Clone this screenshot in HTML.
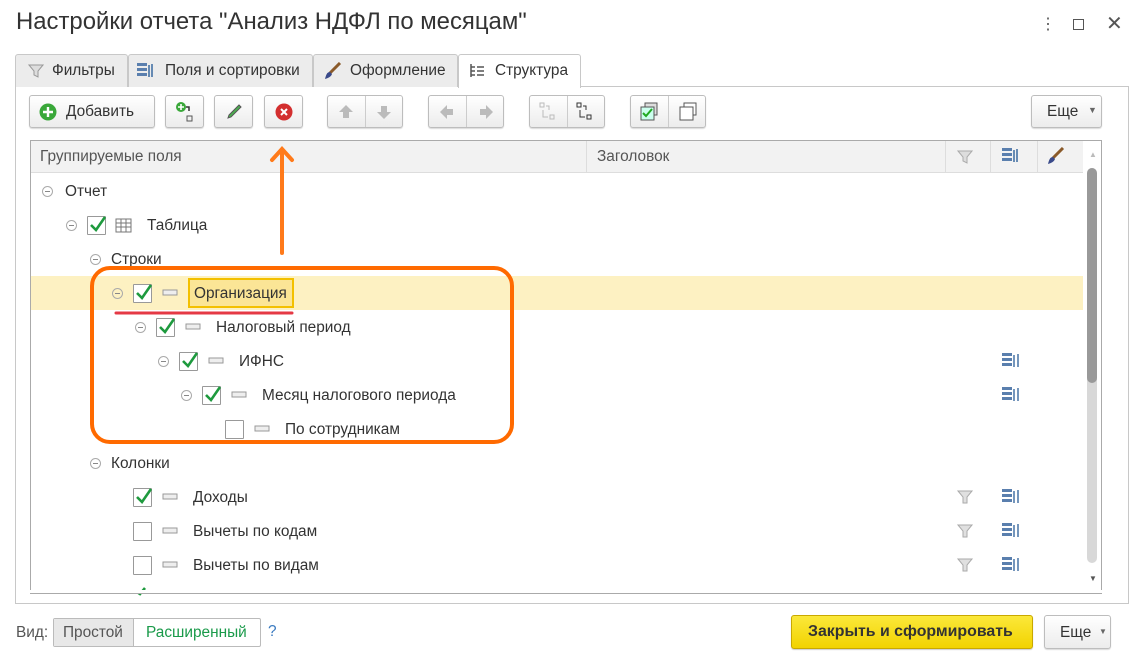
<!DOCTYPE html>
<html><head><meta charset="utf-8"><style>
*{box-sizing:border-box;margin:0;padding:0}
body{width:1143px;height:664px;background:#fff;font-family:"Liberation Sans","Noto Sans CJK SC",sans-serif;color:#333;position:relative;overflow:hidden;font-size:15.4px}
.a{position:absolute}
.tab{position:absolute;top:54px;height:33px;border:1px solid #c8c8c8;border-bottom:none;background:#ececec;border-radius:3px 3px 0 0;font-size:15.4px;line-height:32px;padding-left:36px;color:#333}
.btn{position:absolute;top:95px;height:33px;border:1px solid #bdbdbd;border-radius:3px;background:linear-gradient(#fff,#ececec);box-shadow:0 1px 1px rgba(0,0,0,.15)}
.t{position:absolute;font-size:15.4px;color:#333;white-space:nowrap}
.cb{position:absolute;width:19px;height:19px;border:1px solid #999;background:#fff;border-radius:1px}
.col{position:absolute;width:11px;height:11px;border:1px solid #aaa;border-radius:50%}
.col:after{content:"";position:absolute;left:2px;top:4px;width:5px;height:1px;background:#888}
</style></head><body>
<div class="a" style="left:16px;top:8px;font-size:23.9px;color:#333">Настройки отчета "Анализ НДФЛ по месяцам"</div>
<div class="a" style="left:1040px;top:14px;font-size:16px;color:#555">⋮</div>
<div class="a" style="left:1073px;top:19px;width:11px;height:11px;border:1px solid #555"></div>
<div class="a" style="left:1106px;top:11px;font-size:20px;color:#555">✕</div>

<div class="a" style="left:15px;top:86px;width:1114px;height:518px;border:1px solid #c8c8c8"></div>
<div class="tab" style="left:15px;width:113px">Фильтры<svg class="a" style="left:12px;top:8px" width="16" height="16"><path d="M1 2h14l-5 6v6l-4-2v-4z" fill="#ddd" stroke="#999"/></svg></div>
<div class="tab" style="left:128px;width:185px">Поля и сортировки<svg class="a" style="left:8px;top:7px" width="20" height="18"><g fill="#5a7fae"><rect x="0" y="1" width="10" height="3"/><rect x="0" y="6" width="10" height="3"/><rect x="0" y="11" width="10" height="3"/></g><path d="M12 3v12M15 2v13" stroke="#3a6aa0" stroke-width="1.5"/></svg></div>
<div class="tab" style="left:313px;width:145px">Оформление<svg class="a" style="left:10px;top:7px" width="18" height="18"><path d="M16 1L6 11" stroke="#8a5a2a" stroke-width="3"/><path d="M6 10c-3 0-4 3-5 7 3-1 6-2 7-5z" fill="#3a4a8a"/></svg></div>
<div class="tab" style="left:458px;width:123px;background:#fff;height:34px">Структура<svg class="a" style="left:10px;top:8px" width="16" height="16"><path d="M2 1v13M2 4h4M2 8h4M2 12h4M8 4h7M8 8h7M8 12h7" stroke="#555" stroke-width="1.5"/></svg></div>

<div class="btn" style="left:29px;width:126px"><svg class="a" style="left:9px;top:7px" width="18" height="18"><circle cx="9" cy="9" r="8.5" fill="#3aa83a"/><path d="M9 4v10M4 9h10" stroke="#fff" stroke-width="2.4"/></svg><span class="t" style="left:36px;top:7px">Добавить</span></div>
<div class="btn" style="left:165px;width:39px"><svg class="a" style="left:9px;top:5px" width="22" height="22"><circle cx="6" cy="6" r="5" fill="#3aa83a"/><path d="M6 3v6M3 6h6" stroke="#fff" stroke-width="1.6"/><path d="M14 10V6h-3" stroke="#333" stroke-width="1.5" fill="none"/><rect x="12" y="15" width="5" height="5" fill="none" stroke="#555"/></svg></div>
<div class="btn" style="left:214px;width:39px"><svg class="a" style="left:10px;top:7px" width="18" height="18"><path d="M14 2l2 2-10 10-3 1 1-3z" fill="#4caf50" stroke="#555"/></svg></div>
<div class="btn" style="left:264px;width:39px"><svg class="a" style="left:10px;top:7px" width="18" height="18"><circle cx="9" cy="9" r="8.5" fill="#d32f2f"/><path d="M6 6l6 6M12 6l-6 6" stroke="#fff" stroke-width="2"/></svg></div>
<div class="btn" style="left:327px;width:76px"><div class="a" style="left:37px;top:0;width:1px;height:31px;background:#ccc"></div><svg class="a" style="left:10px;top:8px" width="56" height="16" fill="#bbb"><path d="M8 1l7 7h-4v6H5V8H1z"/><path d="M46 15l7-7h-4V2h-6v6h-4z"/></svg></div>
<div class="btn" style="left:428px;width:76px"><div class="a" style="left:37px;top:0;width:1px;height:31px;background:#ccc"></div><svg class="a" style="left:10px;top:8px" width="56" height="16" fill="#bbb"><path d="M1 8l7-7v4h6v6H8v4z"/><path d="M54 8l-7-7v4h-6v6h6v4z"/></svg></div>
<div class="btn" style="left:529px;width:76px"><div class="a" style="left:37px;top:0;width:1px;height:31px;background:#ccc"></div><svg class="a" style="left:9px;top:6px" width="60" height="20" fill="none" stroke="#bbb"><rect x="1" y="1" width="4" height="4"/><path d="M10 8V4H7M4 8v7h5"/><rect x="11" y="13" width="4" height="4"/><g stroke="#333"><rect x="38" y="1" width="4" height="4"/><path d="M47 8V4h-3M41 8v7h5"/><rect x="48" y="13" width="4" height="4"/></g></svg></div>
<div class="btn" style="left:630px;width:76px"><div class="a" style="left:37px;top:0;width:1px;height:31px;background:#ccc"></div><svg class="a" style="left:9px;top:6px" width="60" height="20"><rect x="5" y="1" width="12" height="12" fill="#ddd" stroke="#555"/><rect x="1" y="5" width="13" height="13" fill="#cfe" stroke="#555"/><path d="M3 11l3 3 6-7" stroke="#2a2" stroke-width="2" fill="none"/><rect x="44" y="1" width="12" height="12" fill="#fff" stroke="#555"/><rect x="40" y="5" width="13" height="13" fill="#fff" stroke="#555"/></svg></div>
<div class="btn" style="left:1031px;width:71px"><span class="t" style="left:15px;top:7px">Еще</span><span class="a" style="left:56px;top:9px;font-size:9px;color:#666">▼</span></div>

<div class="a" style="left:30px;top:140px;width:1072px;height:454px;border:1px solid #aaa"></div>
<div class="a" style="left:31px;top:141px;width:1052px;height:32px;background:#f2f2f2;border-bottom:1px solid #ddd"></div>
<div class="a" style="left:586px;top:141px;width:1px;height:32px;background:#ddd"></div>
<div class="a" style="left:945px;top:141px;width:1px;height:32px;background:#ddd"></div>
<div class="a" style="left:990px;top:141px;width:1px;height:32px;background:#ddd"></div>
<div class="a" style="left:1037px;top:141px;width:1px;height:32px;background:#ddd"></div>
<span class="t" style="left:40px;top:148px;color:#555">Группируемые поля</span>
<span class="t" style="left:597px;top:148px;color:#555">Заголовок</span>
<svg class="a" style="left:957px;top:149px" width="16" height="16"><path d="M1 2h14l-5 6v6l-4-2v-4z" fill="#ddd" stroke="#aaa"/></svg>
<svg class="a" style="left:1002px;top:147px" width="20" height="18"><g fill="#5a7fae"><rect x="0" y="1" width="10" height="3"/><rect x="0" y="6" width="10" height="3"/><rect x="0" y="11" width="10" height="3"/></g><path d="M12 3v12M15 2v13" stroke="#3a6aa0" stroke-width="1.5"/></svg>
<svg class="a" style="left:1047px;top:147px" width="18" height="18"><path d="M16 1L6 11" stroke="#8a5a2a" stroke-width="3"/><path d="M6 10c-3 0-4 3-5 7 3-1 6-2 7-5z" fill="#3a4a8a"/></svg>
<span class="a" style="left:1089px;top:150px;font-size:8px;color:#bbb">▲</span>
<span class="a" style="left:1089px;top:574px;font-size:8px;color:#555">▼</span>
<div class="a" style="left:1087px;top:168px;width:10px;height:395px;background:#d8d8d8;border-radius:5px"></div>
<div class="a" style="left:1087px;top:168px;width:10px;height:215px;background:#999;border-radius:5px"></div>

<div class="a" style="left:31px;top:276px;width:1052px;height:34px;background:#fdf1c2"></div>

<div class="col" style="left:42px;top:186px"></div><span class="t" style="left:65px;top:183px">Отчет</span>
<div class="col" style="left:66px;top:220px"></div><div class="cb" style="left:87px;top:216px"></div>
<svg class="a" style="left:115px;top:218px" width="18" height="16" fill="none" stroke="#777"><rect x="1" y="1" width="15" height="13"/><path d="M1 5h15M1 9h15M6 1v13M11 1v13"/></svg>
<span class="t" style="left:147px;top:217px">Таблица</span>
<div class="col" style="left:90px;top:254px"></div><span class="t" style="left:111px;top:251px">Строки</span>

<div class="col" style="left:112px;top:288px"></div><div class="cb" style="left:133px;top:284px"></div>
<div class="a" style="left:188px;top:278px;width:106px;height:30px;border:2px solid #f3c000;background:#fbe596"></div>
<span class="t" style="left:194px;top:285px">Организация</span>
<div class="col" style="left:135px;top:322px"></div><div class="cb" style="left:156px;top:318px"></div><span class="t" style="left:216px;top:319px">Налоговый период</span>
<div class="col" style="left:158px;top:356px"></div><div class="cb" style="left:179px;top:352px"></div><span class="t" style="left:239px;top:353px">ИФНС</span>
<div class="col" style="left:181px;top:390px"></div><div class="cb" style="left:202px;top:386px"></div><span class="t" style="left:262px;top:387px">Месяц налогового периода</span>
<div class="cb" style="left:225px;top:420px"></div><span class="t" style="left:285px;top:421px">По сотрудникам</span>

<div class="col" style="left:90px;top:458px"></div><span class="t" style="left:111px;top:455px">Колонки</span>
<div class="cb" style="left:133px;top:488px"></div><span class="t" style="left:193px;top:489px">Доходы</span>
<div class="cb" style="left:133px;top:522px"></div><span class="t" style="left:193px;top:523px">Вычеты по кодам</span>
<div class="cb" style="left:133px;top:556px"></div><span class="t" style="left:193px;top:557px">Вычеты по видам</span>

<svg class="a" style="left:0;top:0" width="1143" height="664" fill="none">
<g stroke="#1e9a3e" stroke-width="2.6">
<path d="M91 225l5 5 9-13"/><path d="M137 293l5 5 9-13"/><path d="M160 327l5 5 9-13"/><path d="M183 361l5 5 9-13"/><path d="M206 395l5 5 9-13"/><path d="M137 497l5 5 9-13"/><path d="M137 592l3 2 5-6"/>
</g>
<g stroke="#999" fill="#eee">
<rect x="163" y="290" width="14" height="5"/><rect x="186" y="324" width="14" height="5"/><rect x="209" y="358" width="14" height="5"/><rect x="232" y="392" width="14" height="5"/><rect x="255" y="426" width="14" height="5"/><rect x="163" y="494" width="14" height="5"/><rect x="163" y="528" width="14" height="5"/><rect x="163" y="562" width="14" height="5"/>
</g>
<g fill="#e0e0e0" stroke="#aaa"><path d="M958 491h14l-5 6v6h-4v-6z"/><path d="M958 525h14l-5 6v6h-4v-6z"/><path d="M958 559h14l-5 6v6h-4v-6z"/></g>
<g id="s"><g fill="#5a7fae"><rect x="1002" y="353" width="10" height="3"/><rect x="1002" y="358" width="10" height="3"/><rect x="1002" y="363" width="10" height="3"/></g><path d="M1014 355v12M1018 354v13" stroke="#3a6aa0" stroke-width="1.4"/></g>
<use href="#s" y="34"/><use href="#s" y="136"/><use href="#s" y="170"/><use href="#s" y="204"/>
<rect x="92" y="268" width="420" height="174" rx="18" stroke="#ff6a00" stroke-width="4"/>
<path d="M116 313h176" stroke="#e53945" stroke-width="3" stroke-linecap="round"/>
<path d="M282 253V150M272 160l10-11 10 11" stroke="#ff7a1a" stroke-width="4" stroke-linecap="round"/>
</svg>
<div class="a" style="left:30px;top:590px;width:1072px;height:4px;background:#fff"></div>
<div class="a" style="left:30px;top:593px;width:1072px;height:1px;background:#aaa"></div>

<span class="t" style="left:16px;top:624px;color:#555">Вид:</span>
<div class="a" style="left:53px;top:618px;width:208px;height:29px;border:1px solid #bbb;border-radius:2px;background:#fff"></div>
<div class="a" style="left:54px;top:619px;width:80px;height:27px;background:#e8e8e8;border-right:1px solid #bbb"></div>
<span class="t" style="left:63px;top:624px;color:#555">Простой</span>
<span class="t" style="left:146px;top:624px;color:#1a9a4a">Расширенный</span>
<span class="t" style="left:268px;top:623px;color:#3a7ac0">?</span>
<div class="a" style="left:791px;top:615px;width:242px;height:34px;border:1px solid #c9a800;border-radius:3px;background:linear-gradient(#fbe83a,#f2d300);box-shadow:0 1px 1px rgba(0,0,0,.2)"></div>
<span class="t" style="left:808px;top:623px;font-weight:bold;color:#333;font-size:15.9px">Закрыть и сформировать</span>
<div class="btn" style="left:1044px;top:615px;width:67px;height:34px"><span class="t" style="left:15px;top:8px">Еще</span><span class="a" style="left:54px;top:11px;font-size:8px;color:#666">▼</span></div>
</body></html>
